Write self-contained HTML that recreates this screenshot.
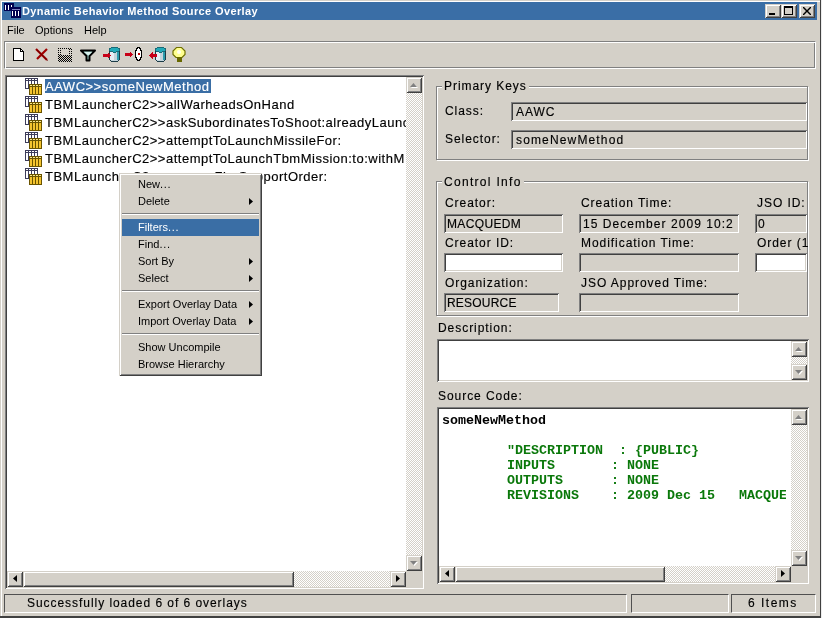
<!DOCTYPE html>
<html><head><meta charset="utf-8">
<style>
*{margin:0;padding:0;box-sizing:border-box}
html,body{width:822px;height:618px;overflow:hidden;background:#d4d0c8;font-family:"Liberation Sans",sans-serif;color:#000}
.a{position:absolute}
.t,.tr,.m,.code,.ttl{will-change:transform}
.t,.tr{-webkit-text-stroke:0.15px}
svg{display:block}
.t{position:absolute;white-space:nowrap;font-size:12px;letter-spacing:0.95px;line-height:14px}
.tr{position:absolute;white-space:nowrap;font-size:13px;letter-spacing:0.5px;line-height:14px}
.m{position:absolute;white-space:nowrap;font-size:11px;line-height:13px}
.sunk{box-shadow:inset 1px 1px #808080,inset -1px -1px #fff,inset 2px 2px #404040,inset -2px -2px #d4d0c8}
.fld{box-shadow:inset 1px 1px #808080,inset -1px -1px #fff,inset 2px 2px #404040,inset -2px -2px #d4d0c8;background:#d4d0c8;overflow:hidden}
.btn{background:#d4d0c8;box-shadow:inset 1px 1px #d4d0c8,inset -1px -1px #404040,inset 2px 2px #fff,inset -2px -2px #808080}
.track{background-color:#eae8e4;background-image:repeating-conic-gradient(#fff 0 25%,#d4d0c8 0 50%);background-size:2px 2px}
.gl{background:#d4d0c8;padding:0 2px}
.code{position:absolute;white-space:pre;font-family:"Liberation Mono",monospace;font-weight:bold;font-size:13.33px;line-height:15px}
</style></head><body>

<div class="a " style="left:0px;top:0px;width:822px;height:618px;background:#d4d0c8"></div>
<div class="a " style="left:1px;top:1px;width:819px;height:616px;border-top:1px solid #fff;border-left:1px solid #fff"></div>
<div class="a " style="left:820px;top:0px;width:1px;height:618px;background:#404040"></div>
<div class="a " style="left:821px;top:0px;width:1px;height:618px;background:#ececec"></div>
<div class="a " style="left:0px;top:616px;width:821px;height:2px;background:#404040"></div>
<div class="a " style="left:2px;top:2px;width:815px;height:18px;background:#3a6ea6"></div>
<div class="a ttl" style="left:22px;top:4px;font-weight:bold;font-size:11px;letter-spacing:0.37px;color:#fff;white-space:nowrap;line-height:14px">Dynamic Behavior Method Source Overlay</div>
<div class="a btn" style="left:765px;top:4px;width:16px;height:14px;"></div>
<div class="a btn" style="left:781px;top:4px;width:16px;height:14px;"></div>
<div class="a btn" style="left:799px;top:4px;width:16px;height:14px;"></div>
<div class="m" style="left:7px;top:24px;">File</div>
<div class="m" style="left:35px;top:24px;">Options</div>
<div class="m" style="left:84px;top:24px;">Help</div>
<div class="a " style="left:4px;top:41px;width:812px;height:28px;border-top:1px solid #808080;border-left:1px solid #808080;border-bottom:1px solid #fff;border-right:1px solid #fff;box-shadow:inset 1px 1px #fff,inset -1px -1px #808080"></div>
<div class="a sunk" style="left:5px;top:75px;width:419px;height:514px;background:#fff"></div>
<div class="a" style="left:7px;top:77px;width:399px;height:494px;overflow:hidden">
<div class="a " style="left:38px;top:2px;width:166px;height:14px;background:#3a6ea5"></div>
<div class="tr" style="left:38px;top:3px;color:#fff">AAWC&gt;&gt;someNewMethod</div>
<div class="tr" style="left:38px;top:21px;">TBMLauncherC2&gt;&gt;allWarheadsOnHand</div>
<div class="tr" style="left:38px;top:39px;">TBMLauncherC2&gt;&gt;askSubordinatesToShoot:alreadyLaunched</div>
<div class="tr" style="left:38px;top:57px;">TBMLauncherC2&gt;&gt;attemptToLaunchMissileFor:</div>
<div class="tr" style="left:38px;top:75px;">TBMLauncherC2&gt;&gt;attemptToLaunchTbmMission:to:withM</div>
<div class="tr" style="left:38px;top:93px;">TBMLauncherC2&gt;&gt;assumeFireSupportOrder:</div>
</div>
<svg class="a" style="left:4px;top:3px" width="18" height="17" shape-rendering="crispEdges"><rect x="0" y="0" width="10" height="8" fill="#000050"/><rect x="1" y="2" width="1" height="5" fill="#fff"/><rect x="4" y="2" width="1" height="5" fill="#fff"/><rect x="7" y="2" width="1" height="5" fill="#fff"/><rect x="7" y="4" width="10" height="11" fill="#000050"/><rect x="8" y="6" width="8" height="1" fill="#8080c0"/><rect x="8" y="8" width="1" height="5" fill="#fff"/><rect x="11" y="8" width="1" height="5" fill="#fff"/><rect x="14" y="8" width="1" height="5" fill="#fff"/></svg>
<svg class="a" style="left:765px;top:4px" width="16" height="14" shape-rendering="crispEdges"><rect x="4" y="9" width="6" height="2" fill="#000"/></svg>
<svg class="a" style="left:781px;top:4px" width="16" height="14" shape-rendering="crispEdges"><rect x="3" y="2" width="9" height="9" fill="#000"/><rect x="4" y="4" width="7" height="6" fill="#d4d0c8"/></svg>
<svg class="a" style="left:799px;top:4px" width="16" height="14" shape-rendering="crispEdges"><path d="M4 3L5 3L8 6L11 3L12 3L12 4L9 7L12 10L12 11L11 11L8 8L5 11L4 11L4 10L7 7L4 4Z" fill="#000" shape-rendering="auto"/></svg>
<svg class="a" style="left:13px;top:48px" width="12" height="13" shape-rendering="crispEdges"><path d="M0.5 0.5H7.5L10.5 3.5V12.5H0.5Z" fill="#fff" stroke="#000"/><path d="M7.5 0.5V3.5H10.5" fill="none" stroke="#000"/></svg>
<svg class="a" style="left:34px;top:47px" width="15" height="15" shape-rendering="crispEdges"><path d="M2 2L13 13M13 2L3 12" stroke="#a00000" stroke-width="2.2" fill="none" shape-rendering="auto"/><path d="M2 2L13 13" stroke="#600000" stroke-width="0.8" fill="none" shape-rendering="auto" transform="translate(0.7,0.7)"/></svg>
<svg class="a" style="left:58px;top:48px" width="14" height="14" shape-rendering="crispEdges"><rect x="0" y="0" width="1" height="1" fill="#000"/><rect x="2" y="0" width="1" height="1" fill="#000"/><rect x="4" y="0" width="1" height="1" fill="#000"/><rect x="6" y="0" width="1" height="1" fill="#000"/><rect x="8" y="0" width="1" height="1" fill="#000"/><rect x="10" y="0" width="1" height="1" fill="#000"/><rect x="12" y="0" width="1" height="1" fill="#000"/><rect x="11" y="1" width="1" height="1" fill="#000"/><rect x="13" y="1" width="1" height="1" fill="#000"/><rect x="0" y="2" width="1" height="1" fill="#000"/><rect x="2" y="2" width="1" height="1" fill="#000"/><rect x="11" y="3" width="1" height="1" fill="#000"/><rect x="13" y="3" width="1" height="1" fill="#000"/><rect x="0" y="4" width="1" height="1" fill="#000"/><rect x="2" y="4" width="1" height="1" fill="#000"/><rect x="11" y="5" width="1" height="1" fill="#000"/><rect x="13" y="5" width="1" height="1" fill="#000"/><rect x="0" y="6" width="1" height="1" fill="#000"/><rect x="2" y="6" width="1" height="1" fill="#000"/><rect x="1" y="7" width="1" height="1" fill="#000"/><rect x="3" y="7" width="1" height="1" fill="#000"/><rect x="5" y="7" width="1" height="1" fill="#000"/><rect x="7" y="7" width="1" height="1" fill="#000"/><rect x="9" y="7" width="1" height="1" fill="#000"/><rect x="11" y="7" width="1" height="1" fill="#000"/><rect x="13" y="7" width="1" height="1" fill="#000"/><rect x="0" y="8" width="1" height="1" fill="#000"/><rect x="2" y="8" width="1" height="1" fill="#000"/><rect x="4" y="8" width="1" height="1" fill="#000"/><rect x="6" y="8" width="1" height="1" fill="#000"/><rect x="8" y="8" width="1" height="1" fill="#000"/><rect x="10" y="8" width="1" height="1" fill="#000"/><rect x="12" y="8" width="1" height="1" fill="#000"/><rect x="1" y="9" width="1" height="1" fill="#000"/><rect x="3" y="9" width="1" height="1" fill="#000"/><rect x="5" y="9" width="1" height="1" fill="#000"/><rect x="7" y="9" width="1" height="1" fill="#000"/><rect x="9" y="9" width="1" height="1" fill="#000"/><rect x="11" y="9" width="1" height="1" fill="#000"/><rect x="13" y="9" width="1" height="1" fill="#000"/><rect x="0" y="10" width="1" height="1" fill="#000"/><rect x="2" y="10" width="1" height="1" fill="#000"/><rect x="4" y="10" width="1" height="1" fill="#000"/><rect x="6" y="10" width="1" height="1" fill="#000"/><rect x="8" y="10" width="1" height="1" fill="#000"/><rect x="10" y="10" width="1" height="1" fill="#000"/><rect x="12" y="10" width="1" height="1" fill="#000"/><rect x="1" y="11" width="1" height="1" fill="#000"/><rect x="3" y="11" width="1" height="1" fill="#000"/><rect x="5" y="11" width="1" height="1" fill="#000"/><rect x="7" y="11" width="1" height="1" fill="#000"/><rect x="9" y="11" width="1" height="1" fill="#000"/><rect x="11" y="11" width="1" height="1" fill="#000"/><rect x="13" y="11" width="1" height="1" fill="#000"/><rect x="0" y="12" width="1" height="1" fill="#000"/><rect x="2" y="12" width="1" height="1" fill="#000"/><rect x="4" y="12" width="1" height="1" fill="#000"/><rect x="6" y="12" width="1" height="1" fill="#000"/><rect x="8" y="12" width="1" height="1" fill="#000"/><rect x="10" y="12" width="1" height="1" fill="#000"/><rect x="12" y="12" width="1" height="1" fill="#000"/><rect x="1" y="13" width="1" height="1" fill="#000"/><rect x="3" y="13" width="1" height="1" fill="#000"/><rect x="5" y="13" width="1" height="1" fill="#000"/><rect x="7" y="13" width="1" height="1" fill="#000"/><rect x="9" y="13" width="1" height="1" fill="#000"/><rect x="11" y="13" width="1" height="1" fill="#000"/><rect x="13" y="13" width="1" height="1" fill="#000"/></svg>
<svg class="a" style="left:80px;top:49px" width="16" height="13" shape-rendering="crispEdges"><path d="M1 1.5H15L9.5 7V11.5H6.5V7Z" fill="#9ccfc8" stroke="#000" stroke-width="2" stroke-linejoin="round" shape-rendering="auto"/><path d="M4 3H12L8.5 6.5Z" fill="#d8f0ec" shape-rendering="auto"/></svg>
<svg class="a" style="left:102px;top:46px" width="20" height="17" shape-rendering="crispEdges"><path d="M7.5 3.5V13Q7.5 15.5 12.5 15.5Q17.5 15.5 17.5 13V3.5Z" fill="#c4d4dc" stroke="#1c3c48" stroke-width="1"/><rect x="8" y="5" width="4" height="9" fill="#e8eef4"/><rect x="15" y="5" width="2" height="9" fill="#2c9cac"/><ellipse cx="12.5" cy="3.8" rx="5" ry="2.3" fill="#22aab8" stroke="#1a6a76" stroke-width="1"/><path d="M9 9.5L5.5 6V8H1V11H5.5V13Z" fill="#c80018"/></svg>
<svg class="a" style="left:124px;top:46px" width="20" height="17" shape-rendering="crispEdges"><path d="M9 8.5L5.5 5V7H1V10H5.5V12Z" fill="#c80018"/><path d="M13.5 1.5H15.5L17.5 5V10L15.5 14.5H13.5L11.5 10V5Z" fill="#fff" stroke="#000" stroke-width="1.3" stroke-linejoin="round"/><rect x="14" y="7" width="1.5" height="1.5" fill="#c00000"/></svg>
<svg class="a" style="left:148px;top:46px" width="20" height="17" shape-rendering="crispEdges"><path d="M7.5 3.5V13Q7.5 15.5 12.5 15.5Q17.5 15.5 17.5 13V3.5Z" fill="#c4d4dc" stroke="#1c3c48" stroke-width="1"/><rect x="8" y="5" width="4" height="9" fill="#e8eef4"/><rect x="15" y="5" width="2" height="9" fill="#2c9cac"/><ellipse cx="12.5" cy="3.8" rx="5" ry="2.3" fill="#22aab8" stroke="#1a6a76" stroke-width="1"/><path d="M1 9.5L4.5 6V8H9V11H4.5V13Z" fill="#c80018"/></svg>
<svg class="a" style="left:172px;top:46px" width="16" height="17" shape-rendering="crispEdges"><path d="M4.5 1.5H9.5L13 5V8.5L10 11.5H4L1 8.5V5Z" fill="#ffff90" stroke="#707000" stroke-width="1.2" shape-rendering="auto"/><rect x="5" y="11" width="4.5" height="5" fill="#686800"/><circle cx="7" cy="6" r="2" fill="#fffff0" shape-rendering="auto"/></svg>
<svg class="a" style="left:25px;top:78px" width="17" height="17" shape-rendering="crispEdges"><rect x="0" y="0" width="13" height="11" fill="#3c3c5a"/><rect x="1" y="1" width="2" height="1" fill="#fff"/><rect x="1" y="3" width="2" height="7" fill="#fff"/><rect x="4" y="1" width="2" height="1" fill="#fff"/><rect x="4" y="3" width="2" height="7" fill="#fff"/><rect x="7" y="1" width="2" height="1" fill="#fff"/><rect x="7" y="3" width="2" height="7" fill="#fff"/><rect x="10" y="1" width="2" height="1" fill="#fff"/><rect x="10" y="3" width="2" height="7" fill="#fff"/><rect x="4" y="6" width="13" height="11" fill="#6a5400"/><rect x="5" y="7" width="2" height="1" fill="#f8e890"/><rect x="5" y="9" width="2" height="7" fill="#f4c430"/><rect x="8" y="7" width="2" height="1" fill="#f8e890"/><rect x="8" y="9" width="2" height="7" fill="#f4c430"/><rect x="11" y="7" width="2" height="1" fill="#f8e890"/><rect x="11" y="9" width="2" height="7" fill="#f4c430"/><rect x="14" y="7" width="2" height="1" fill="#f8e890"/><rect x="14" y="9" width="2" height="7" fill="#f4c430"/></svg>
<svg class="a" style="left:25px;top:96px" width="17" height="17" shape-rendering="crispEdges"><rect x="0" y="0" width="13" height="11" fill="#3c3c5a"/><rect x="1" y="1" width="2" height="1" fill="#fff"/><rect x="1" y="3" width="2" height="7" fill="#fff"/><rect x="4" y="1" width="2" height="1" fill="#fff"/><rect x="4" y="3" width="2" height="7" fill="#fff"/><rect x="7" y="1" width="2" height="1" fill="#fff"/><rect x="7" y="3" width="2" height="7" fill="#fff"/><rect x="10" y="1" width="2" height="1" fill="#fff"/><rect x="10" y="3" width="2" height="7" fill="#fff"/><rect x="4" y="6" width="13" height="11" fill="#6a5400"/><rect x="5" y="7" width="2" height="1" fill="#f8e890"/><rect x="5" y="9" width="2" height="7" fill="#f4c430"/><rect x="8" y="7" width="2" height="1" fill="#f8e890"/><rect x="8" y="9" width="2" height="7" fill="#f4c430"/><rect x="11" y="7" width="2" height="1" fill="#f8e890"/><rect x="11" y="9" width="2" height="7" fill="#f4c430"/><rect x="14" y="7" width="2" height="1" fill="#f8e890"/><rect x="14" y="9" width="2" height="7" fill="#f4c430"/></svg>
<svg class="a" style="left:25px;top:114px" width="17" height="17" shape-rendering="crispEdges"><rect x="0" y="0" width="13" height="11" fill="#3c3c5a"/><rect x="1" y="1" width="2" height="1" fill="#fff"/><rect x="1" y="3" width="2" height="7" fill="#fff"/><rect x="4" y="1" width="2" height="1" fill="#fff"/><rect x="4" y="3" width="2" height="7" fill="#fff"/><rect x="7" y="1" width="2" height="1" fill="#fff"/><rect x="7" y="3" width="2" height="7" fill="#fff"/><rect x="10" y="1" width="2" height="1" fill="#fff"/><rect x="10" y="3" width="2" height="7" fill="#fff"/><rect x="4" y="6" width="13" height="11" fill="#6a5400"/><rect x="5" y="7" width="2" height="1" fill="#f8e890"/><rect x="5" y="9" width="2" height="7" fill="#f4c430"/><rect x="8" y="7" width="2" height="1" fill="#f8e890"/><rect x="8" y="9" width="2" height="7" fill="#f4c430"/><rect x="11" y="7" width="2" height="1" fill="#f8e890"/><rect x="11" y="9" width="2" height="7" fill="#f4c430"/><rect x="14" y="7" width="2" height="1" fill="#f8e890"/><rect x="14" y="9" width="2" height="7" fill="#f4c430"/></svg>
<svg class="a" style="left:25px;top:132px" width="17" height="17" shape-rendering="crispEdges"><rect x="0" y="0" width="13" height="11" fill="#3c3c5a"/><rect x="1" y="1" width="2" height="1" fill="#fff"/><rect x="1" y="3" width="2" height="7" fill="#fff"/><rect x="4" y="1" width="2" height="1" fill="#fff"/><rect x="4" y="3" width="2" height="7" fill="#fff"/><rect x="7" y="1" width="2" height="1" fill="#fff"/><rect x="7" y="3" width="2" height="7" fill="#fff"/><rect x="10" y="1" width="2" height="1" fill="#fff"/><rect x="10" y="3" width="2" height="7" fill="#fff"/><rect x="4" y="6" width="13" height="11" fill="#6a5400"/><rect x="5" y="7" width="2" height="1" fill="#f8e890"/><rect x="5" y="9" width="2" height="7" fill="#f4c430"/><rect x="8" y="7" width="2" height="1" fill="#f8e890"/><rect x="8" y="9" width="2" height="7" fill="#f4c430"/><rect x="11" y="7" width="2" height="1" fill="#f8e890"/><rect x="11" y="9" width="2" height="7" fill="#f4c430"/><rect x="14" y="7" width="2" height="1" fill="#f8e890"/><rect x="14" y="9" width="2" height="7" fill="#f4c430"/></svg>
<svg class="a" style="left:25px;top:150px" width="17" height="17" shape-rendering="crispEdges"><rect x="0" y="0" width="13" height="11" fill="#3c3c5a"/><rect x="1" y="1" width="2" height="1" fill="#fff"/><rect x="1" y="3" width="2" height="7" fill="#fff"/><rect x="4" y="1" width="2" height="1" fill="#fff"/><rect x="4" y="3" width="2" height="7" fill="#fff"/><rect x="7" y="1" width="2" height="1" fill="#fff"/><rect x="7" y="3" width="2" height="7" fill="#fff"/><rect x="10" y="1" width="2" height="1" fill="#fff"/><rect x="10" y="3" width="2" height="7" fill="#fff"/><rect x="4" y="6" width="13" height="11" fill="#6a5400"/><rect x="5" y="7" width="2" height="1" fill="#f8e890"/><rect x="5" y="9" width="2" height="7" fill="#f4c430"/><rect x="8" y="7" width="2" height="1" fill="#f8e890"/><rect x="8" y="9" width="2" height="7" fill="#f4c430"/><rect x="11" y="7" width="2" height="1" fill="#f8e890"/><rect x="11" y="9" width="2" height="7" fill="#f4c430"/><rect x="14" y="7" width="2" height="1" fill="#f8e890"/><rect x="14" y="9" width="2" height="7" fill="#f4c430"/></svg>
<svg class="a" style="left:25px;top:168px" width="17" height="17" shape-rendering="crispEdges"><rect x="0" y="0" width="13" height="11" fill="#3c3c5a"/><rect x="1" y="1" width="2" height="1" fill="#fff"/><rect x="1" y="3" width="2" height="7" fill="#fff"/><rect x="4" y="1" width="2" height="1" fill="#fff"/><rect x="4" y="3" width="2" height="7" fill="#fff"/><rect x="7" y="1" width="2" height="1" fill="#fff"/><rect x="7" y="3" width="2" height="7" fill="#fff"/><rect x="10" y="1" width="2" height="1" fill="#fff"/><rect x="10" y="3" width="2" height="7" fill="#fff"/><rect x="4" y="6" width="13" height="11" fill="#6a5400"/><rect x="5" y="7" width="2" height="1" fill="#f8e890"/><rect x="5" y="9" width="2" height="7" fill="#f4c430"/><rect x="8" y="7" width="2" height="1" fill="#f8e890"/><rect x="8" y="9" width="2" height="7" fill="#f4c430"/><rect x="11" y="7" width="2" height="1" fill="#f8e890"/><rect x="11" y="9" width="2" height="7" fill="#f4c430"/><rect x="14" y="7" width="2" height="1" fill="#f8e890"/><rect x="14" y="9" width="2" height="7" fill="#f4c430"/></svg>
<div class="a track" style="left:406px;top:77px;width:16px;height:494px;"></div>
<div class="a btn" style="left:406px;top:77px;width:16px;height:16px;"><svg class="a" style="left:0;top:0" width="16" height="16"><path d="M7.5 6L11 10L4 10Z" fill="#fff" transform="translate(1,1)"/><path d="M7.5 6L11 10L4 10Z" fill="#808080"/></svg></div>
<div class="a btn" style="left:406px;top:555px;width:16px;height:16px;"><svg class="a" style="left:0;top:0" width="16" height="16"><path d="M4 6L11 6L7.5 10Z" fill="#fff" transform="translate(1,1)"/><path d="M4 6L11 6L7.5 10Z" fill="#808080"/></svg></div>
<div class="a track" style="left:7px;top:571px;width:399px;height:16px;"></div>
<div class="a btn" style="left:7px;top:571px;width:16px;height:16px;"><svg class="a" style="left:0;top:0" width="16" height="16"><path d="M10 4L10 11L6 7.5Z" fill="#000"/></svg></div>
<div class="a btn" style="left:23px;top:571px;width:271px;height:16px;"></div>
<div class="a btn" style="left:390px;top:571px;width:16px;height:16px;"><svg class="a" style="left:0;top:0" width="16" height="16"><path d="M6 4L6 11L10 7.5Z" fill="#000"/></svg></div>
<div class="a " style="left:406px;top:571px;width:16px;height:16px;background:#d4d0c8"></div>
<div class="a " style="left:436px;top:86px;width:372px;height:74px;border:1px solid #808080;box-shadow:inset 1px 1px #fff,1px 1px #fff"></div>
<div class="t gl" style="left:442px;top:79px;">Primary Keys</div>
<div class="t" style="left:445px;top:104px;">Class:</div>
<div class="t" style="left:445px;top:132px;">Selector:</div>
<div class="a fld" style="left:511px;top:102px;width:296px;height:19px;"><div class="a" style="left:2px;top:2px;width:292px;height:15px;overflow:hidden"><div class="t" style="left:3px;top:1px;">AAWC</div></div></div>
<div class="a fld" style="left:511px;top:130px;width:296px;height:19px;"><div class="a" style="left:2px;top:2px;width:292px;height:15px;overflow:hidden"><div class="t" style="left:3px;top:1px;letter-spacing:1.15px">someNewMethod</div></div></div>
<div class="a " style="left:436px;top:181px;width:372px;height:135px;border:1px solid #808080;box-shadow:inset 1px 1px #fff,1px 1px #fff"></div>
<div class="t gl" style="left:442px;top:175px;letter-spacing:1.3px">Control Info</div>
<div class="t" style="left:445px;top:196px;">Creator:</div>
<div class="t" style="left:581px;top:196px;">Creation Time:</div>
<div class="t" style="left:757px;top:196px;">JSO ID:</div>
<div class="a fld" style="left:444px;top:214px;width:119px;height:19px;"><div class="a" style="left:2px;top:2px;width:115px;height:15px;overflow:hidden"><div class="t" style="left:1px;top:1px;letter-spacing:0.35px">MACQUEDM</div></div></div>
<div class="a fld" style="left:579px;top:214px;width:160px;height:19px;"><div class="a" style="left:2px;top:2px;width:152px;height:15px;overflow:hidden"><div class="t" style="left:2px;top:1px;letter-spacing:1.05px">15 December 2009 10:24</div></div></div>
<div class="a fld" style="left:755px;top:214px;width:52px;height:19px;"><div class="a" style="left:2px;top:2px;width:48px;height:15px;overflow:hidden"><div class="t" style="left:1px;top:1px;">0</div></div></div>
<div class="t" style="left:445px;top:236px;">Creator ID:</div>
<div class="t" style="left:581px;top:236px;">Modification Time:</div>
<div class="t" style="left:757px;top:236px;">Order (1</div>
<div class="a fld" style="left:444px;top:253px;width:119px;height:19px;background:#fff"></div>
<div class="a fld" style="left:579px;top:253px;width:160px;height:19px;"></div>
<div class="a fld" style="left:755px;top:253px;width:52px;height:19px;background:#fff"></div>
<div class="t" style="left:445px;top:276px;">Organization:</div>
<div class="t" style="left:581px;top:276px;">JSO Approved Time:</div>
<div class="a fld" style="left:444px;top:293px;width:115px;height:19px;"><div class="a" style="left:2px;top:2px;width:111px;height:15px;overflow:hidden"><div class="t" style="left:1px;top:1px;letter-spacing:0.2px">RESOURCE</div></div></div>
<div class="a fld" style="left:579px;top:293px;width:160px;height:19px;"></div>
<div class="t" style="left:438px;top:321px;">Description:</div>
<div class="a sunk" style="left:437px;top:339px;width:372px;height:43px;background:#fff"></div>
<div class="a track" style="left:791px;top:341px;width:16px;height:39px;"></div>
<div class="a btn" style="left:791px;top:341px;width:16px;height:16px;"><svg class="a" style="left:0;top:0" width="16" height="16"><path d="M7.5 6L11 10L4 10Z" fill="#fff" transform="translate(1,1)"/><path d="M7.5 6L11 10L4 10Z" fill="#808080"/></svg></div>
<div class="a btn" style="left:791px;top:364px;width:16px;height:16px;"><svg class="a" style="left:0;top:0" width="16" height="16"><path d="M4 6L11 6L7.5 10Z" fill="#fff" transform="translate(1,1)"/><path d="M4 6L11 6L7.5 10Z" fill="#808080"/></svg></div>
<div class="t" style="left:438px;top:389px;">Source Code:</div>
<div class="a sunk" style="left:437px;top:407px;width:372px;height:177px;background:#fff"></div>
<div class="a" style="left:439px;top:409px;width:347px;height:157px;overflow:hidden">
<div class="code" style="left:3px;top:4px;">someNewMethod</div>
<div class="code" style="left:68px;top:34px;color:#0a780a">"DESCRIPTION  : {PUBLIC}
INPUTS       : NONE
OUTPUTS      : NONE
REVISIONS    : 2009 Dec 15   MACQUEDM</div>
</div>
<div class="a track" style="left:791px;top:409px;width:16px;height:157px;"></div>
<div class="a btn" style="left:791px;top:409px;width:16px;height:16px;"><svg class="a" style="left:0;top:0" width="16" height="16"><path d="M7.5 6L11 10L4 10Z" fill="#fff" transform="translate(1,1)"/><path d="M7.5 6L11 10L4 10Z" fill="#808080"/></svg></div>
<div class="a btn" style="left:791px;top:550px;width:16px;height:16px;"><svg class="a" style="left:0;top:0" width="16" height="16"><path d="M4 6L11 6L7.5 10Z" fill="#fff" transform="translate(1,1)"/><path d="M4 6L11 6L7.5 10Z" fill="#808080"/></svg></div>
<div class="a track" style="left:439px;top:566px;width:352px;height:16px;"></div>
<div class="a btn" style="left:439px;top:566px;width:16px;height:16px;"><svg class="a" style="left:0;top:0" width="16" height="16"><path d="M10 4L10 11L6 7.5Z" fill="#000"/></svg></div>
<div class="a btn" style="left:455px;top:566px;width:210px;height:16px;"></div>
<div class="a btn" style="left:775px;top:566px;width:16px;height:16px;"><svg class="a" style="left:0;top:0" width="16" height="16"><path d="M6 4L6 11L10 7.5Z" fill="#000"/></svg></div>
<div class="a " style="left:791px;top:566px;width:16px;height:16px;background:#d4d0c8"></div>
<div class="a " style="left:4px;top:594px;width:623px;height:19px;border-top:1px solid #505050;border-left:1px solid #505050;border-bottom:1px solid #fff;border-right:1px solid #fff"></div>
<div class="a " style="left:631px;top:594px;width:98px;height:19px;border-top:1px solid #505050;border-left:1px solid #505050;border-bottom:1px solid #fff;border-right:1px solid #fff"></div>
<div class="a " style="left:731px;top:594px;width:85px;height:19px;border-top:1px solid #505050;border-left:1px solid #505050;border-bottom:1px solid #fff;border-right:1px solid #fff"></div>
<div class="t" style="left:27px;top:596px;">Successfully loaded 6 of 6 overlays</div>
<div class="t" style="left:748px;top:596px;letter-spacing:1.5px">6 Items</div>
<div class="a " style="left:119px;top:173px;width:143px;height:203px;background:#d4d0c8;box-shadow:inset 1px 1px #d4d0c8,inset -1px -1px #404040,inset 2px 2px #fff,inset -2px -2px #808080"></div>
<div class="m" style="left:138px;top:178px;color:#000">New<span style="letter-spacing:0.7px">...</span></div>
<div class="m" style="left:138px;top:195px;color:#000">Delete</div>
<svg class="a" style="left:249px;top:198px" width="5" height="8"><path d="M0 0L4 3.5L0 7Z" fill="#000"/></svg>
<div class="a " style="left:122px;top:213px;width:137px;height:1px;background:#808080"></div>
<div class="a " style="left:122px;top:214px;width:137px;height:1px;background:#fff"></div>
<div class="a " style="left:122px;top:219px;width:137px;height:17px;background:#3a6ea5"></div>
<div class="m" style="left:138px;top:221px;color:#fff">Filters<span style="letter-spacing:0.7px">...</span></div>
<div class="m" style="left:138px;top:238px;color:#000">Find<span style="letter-spacing:0.7px">...</span></div>
<div class="m" style="left:138px;top:255px;color:#000">Sort By</div>
<svg class="a" style="left:249px;top:258px" width="5" height="8"><path d="M0 0L4 3.5L0 7Z" fill="#000"/></svg>
<div class="m" style="left:138px;top:272px;color:#000">Select</div>
<svg class="a" style="left:249px;top:275px" width="5" height="8"><path d="M0 0L4 3.5L0 7Z" fill="#000"/></svg>
<div class="a " style="left:122px;top:290px;width:137px;height:1px;background:#808080"></div>
<div class="a " style="left:122px;top:291px;width:137px;height:1px;background:#fff"></div>
<div class="m" style="left:138px;top:298px;color:#000">Export Overlay Data</div>
<svg class="a" style="left:249px;top:301px" width="5" height="8"><path d="M0 0L4 3.5L0 7Z" fill="#000"/></svg>
<div class="m" style="left:138px;top:315px;color:#000">Import Overlay Data</div>
<svg class="a" style="left:249px;top:318px" width="5" height="8"><path d="M0 0L4 3.5L0 7Z" fill="#000"/></svg>
<div class="a " style="left:122px;top:333px;width:137px;height:1px;background:#808080"></div>
<div class="a " style="left:122px;top:334px;width:137px;height:1px;background:#fff"></div>
<div class="m" style="left:138px;top:341px;color:#000">Show Uncompile</div>
<div class="m" style="left:138px;top:358px;color:#000">Browse Hierarchy</div>
</body></html>
